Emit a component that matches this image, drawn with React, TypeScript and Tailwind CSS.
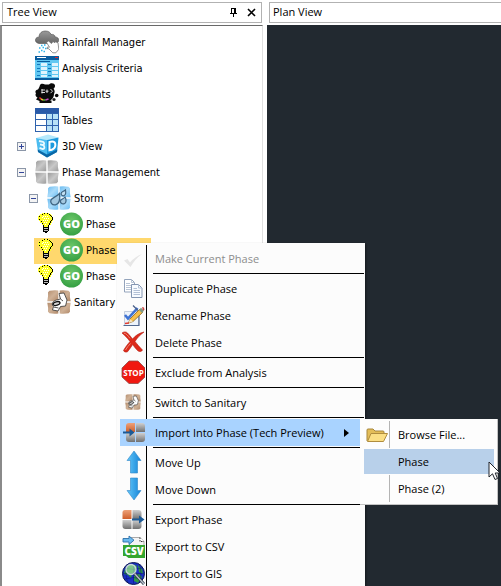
import type { ReactNode } from "react";
import clsx from "clsx";

/* ---------- Tree icons ---------- */

function RainIcon() {
  return (
    <svg viewBox="0 0 24 24" className="w-6 h-6">
      <defs>
        <linearGradient id="cloud" x1="0" y1="0" x2="0" y2="1">
          <stop offset="0" stopColor="#9a9a9a" />
          <stop offset="1" stopColor="#666" />
        </linearGradient>
      </defs>
      <path d="M4 13.500C1.500 13 0 11.500 .5 9.500 1 7.500 2.500 7 4 7.200 4 3 7 1 10.500 1c3 0 5 1.500 5.500 3.500 2.500-.5 4 .7 4.200 2.500C22.500 7 24 8.500 23.700 10.500c-.3 2-2 3-4 3z" fill="url(#cloud)" stroke="#4e4e4e" strokeWidth=".6" />
      <path d="M9 15h1.500M6 15.500h1.500M7.500 17.500H9M4 18h1.500M10 18.500h1.500M6 20.500h1.500M8.500 21.500H10M3.500 22H5" stroke="#2fb4ea" strokeWidth="1.500" />
      <path d="M11.500 12.500l2-1.500 3 2.500 1.500-2 1.800 1.200.7-.9 2.500 1 .8 6.500-3 3.500h-3l-4-4-1.800-.3.500-1.500 2 .2z" fill="#fff" stroke="#666" strokeWidth=".7" />
    </svg>
  );
}

function CriteriaIcon() {
  return (
    <svg viewBox="0 0 24 24" className="w-6 h-6" shapeRendering="crispEdges">
      <path d="M0 0h24v24H0z" fill="#62c8f2" />
      <path d="M0 0h24v4H0zM0 22h24v2H0z" fill="#0a5c9e" />
      <path d="M2 1h9v1H2z" fill="#fff" />
      <path d="M20 1h3v1h-3z" fill="#e0262c" />
      <path d="M2 5h13v1H2z" fill="#0a5c9e" />
      <path d="M6 7h6v14H6zM17 7h6v14h-6z" fill="#dff4fd" />
      <path d="M2 8h3v1H2zM2 12h3v1H2zM2 15h3v1H2zM2 19h3v1H2zM13 8h3v1h-3zM13 12h3v1h-3zM13 15h3v1h-3zM13 19h3v1h-3z" fill="#1379bd" />
      <path d="M6 10h6v1H6zM6 14h6v1H6zM6 18h6v1H6zM17 10h6v1h-6zM17 14h6v1h-6zM17 18h6v1h-6z" fill="#62c8f2" />
    </svg>
  );
}

function PollutantsIcon() {
  return (
    <svg viewBox="0 0 24 24" className="w-6 h-6">
      <path d="M5 3C6 1 8.500 1.500 10 2.500h4C15.500.8 19.500.8 20 3.500c.2 1.500-.6 2.500-1.500 3 1.500 2 1.300 3.500.5 5.500 0 3-2 6-4.500 6.500h2V21H4.500v-2L1 17.500l1.500-2C.5 15 0 12.500 1 11.500c-1.500-2 0-4 2-4C3.500 6.500 4.500 5 5 3z" fill="#0a0a0a" />
      <path d="M6.500 8h3.500M6.500 10.500H10M7 7v4.500M12 7.500v3.500M10.500 9.200h3M15.500 7l2 2.200-2 2" stroke="#eee" strokeWidth=".9" fill="none" />
      <circle cx="21.700" cy="13.500" r="1.800" fill="#0a0a0a" />
      <circle cx="19" cy="17.500" r="1.600" fill="#222" />
      <path d="M4.500 15.500L6 17" stroke="#e33" strokeWidth="1.400" />
      <path d="M6 17l2 1" stroke="#f5b52e" strokeWidth="1.400" />
      <path d="M8 18h2.500" stroke="#58c03a" strokeWidth="1.400" />
      <path d="M10.500 18l3-1" stroke="#c04ac0" strokeWidth="1.400" />
    </svg>
  );
}

function TablesIcon() {
  return (
    <svg viewBox="0 0 24 24" className="w-6 h-6" shapeRendering="crispEdges">
      <path d="M0 0h24v24H0z" fill="#2f62ad" />
      <path d="M1 6h10v5H1zM1 12h10v5H1zM1 18h10v5H1z" fill="#fff" />
      <path d="M12 6h5v5h-5zM12 12h5v5h-5zM12 18h5v5h-5zM18 6h5v5h-5zM18 12h5v5h-5zM18 18h5v5h-5z" fill="#b9e2f7" />
      <path d="M0 0h24v5H0z" fill="#2a5aa8" />
    </svg>
  );
}

function ThreeDIcon() {
  return (
    <svg viewBox="0 0 24 24" className="w-6 h-6">
      <path d="M1 4L13 .5l10.500 3L12 6z" fill="#b4e8fb" />
      <path d="M1 4l11 2v17.500L3 18z" fill="#4cbcf0" />
      <path d="M23.500 3.500L12 6v17.500l10-5.500z" fill="#1c9ade" />
      <path d="M3 18l9 5.500 10-5.500.3-2.500L12 20.500 2.700 15.500z" fill="#0b67a6" />
      <path d="M4 7l4 .8c1.500.6 1.500 2.600 0 3.200 2 1 1.800 4.200-.3 4L4.500 13.800M5 10.300l3 .7" fill="none" stroke="#eafaff" strokeWidth="1.800" />
      <path d="M14.500 8v8.300l2.200-.6c3-1.200 4-3.200 3.600-5.900-.3-2-2.300-2.700-5.800-1.800z" fill="none" stroke="#fff" strokeWidth="2" />
    </svg>
  );
}

// Four tiles with flared outer corners, shared by every phase related icon
const TILES = [
  "M2.500 .8Q7 0 11.300 .5v10.800H.3Q1.500 6 1 2.200z",
  "M12.700.5Q17 0 21.500 .8L23 2.200q-.5 4 .7 9.100h-11z",
  "M.3 12.700h11v10.800q-4.500 .5-8.800-.2L1 21.800q.5-4-.7-9.100z",
  "M12.700 12.700h11q-1.200 5-.7 9.100l-1.500 1.500q-4.300.7-8.800.2z",
];

function TileDefs() {
  return (
    <svg className="absolute w-0 h-0" aria-hidden="true">
      <defs>
        <linearGradient id="tileGray" x1="0" y1="0" x2="1" y2="1">
          <stop offset="0" stopColor="#999" />
          <stop offset=".5" stopColor="#c8c8c8" />
          <stop offset="1" stopColor="#9c9c9c" />
        </linearGradient>
        <linearGradient id="tileDark" x1="0" y1="0" x2="0" y2="1">
          <stop offset="0" stopColor="#cfcfcf" />
          <stop offset="1" stopColor="#707070" />
        </linearGradient>
        <linearGradient id="tileBlue" x1="0" y1="0" x2="1" y2="1">
          <stop offset="0" stopColor="#6cbcf0" />
          <stop offset=".5" stopColor="#a9dbfa" />
          <stop offset="1" stopColor="#6cbef2" />
        </linearGradient>
        <linearGradient id="tileTan" x1="0" y1="0" x2="1" y2="1">
          <stop offset="0" stopColor="#b38c6d" />
          <stop offset=".5" stopColor="#cfb196" />
          <stop offset="1" stopColor="#b08868" />
        </linearGradient>
        <linearGradient id="tileOrange" x1="0" y1="0" x2="0" y2="1">
          <stop offset="0" stopColor="#eda27a" />
          <stop offset="1" stopColor="#cf5f2a" />
        </linearGradient>
        <linearGradient id="arrowBlue" x1="0" y1="0" x2="1" y2="0">
          <stop offset="0" stopColor="#62c6f8" />
          <stop offset="1" stopColor="#1484d8" />
        </linearGradient>
        <radialGradient id="go" cx=".5" cy=".35" r=".65">
          <stop offset="0" stopColor="#6cc668" />
          <stop offset="1" stopColor="#35a043" />
        </radialGradient>
      </defs>
    </svg>
  );
}

function PhasesIcon() {
  return (
    <svg viewBox="0 0 24 24" className="w-6 h-6">
      {TILES.map((d) => (
        <path key={d} d={d} fill="url(#tileGray)" />
      ))}
    </svg>
  );
}

function StormIcon() {
  return (
    <svg viewBox="0 0 24 24" className="w-6 h-6">
      {TILES.map((d) => (
        <path key={d} d={d} fill="url(#tileBlue)" />
      ))}
      <path d="M12.500 7.500c.5 4 .5 10.500-4 11.300C5 19.500 3 16.500 4 14c1-2.500 5.500-3 8.500-6.500z" fill="#a3c8e0" stroke="#3f6480" strokeWidth="1.300" />
      <path d="M18.500 4c.6 3 .3 5.500-2 5.800-2 .2-3-1.800-2-3.200.8-1.100 2.500-1.300 4-2.600z" fill="#c2e0f2" stroke="#3f6480" strokeWidth="1.200" />
      <path d="M18 11c1.500 2.500 1.500 6-.7 6.800-2.300.7-4.300-1-3.800-3 .5-1.500 3-1.800 4.500-3.800z" fill="#a3c8e0" stroke="#3f6480" strokeWidth="1.200" />
    </svg>
  );
}

function SanitaryIcon({ small }: { small?: boolean }) {
  return (
    <svg viewBox="0 0 24 24" className={small ? "w-4 h-4 m-1" : "w-6 h-6"}>
      {TILES.map((d) => (
        <path key={d} d={d} fill="url(#tileTan)" />
      ))}
      <path d="M12 3.500l5-.5 3 7-1.500 6-5 .5-2.500 4.500-5.500-1 1-3.500C4 14.500 5.500 11 9.500 10l4-1z" fill="#fff" stroke="#333" strokeWidth=".8" />
      <path d="M6 14.500c0-2.500 6-4 7-2 .5 2-5.500 4.500-7 2z" fill="#d8d8d8" stroke="#111" strokeWidth="1.300" />
      <path d="M13.500 9l2.500 2M6.500 17l5 1" stroke="#555" fill="none" />
    </svg>
  );
}

function BulbIcon() {
  return (
    <svg viewBox="0 0 16 20" className="w-4 h-5" shapeRendering="crispEdges">
      <path d="M4 0h7v1h2v1h1v2h1v4h-1v2h-1v2h-2v2H5v-2H4v-2H2V8H1V7H0V3h1V2h1V1h2z" fill="#ffff28" />
      <path d="M5 3h1v1H5zM7 3h1v1H7zM9 3h1v1H9zM4 4h1v1H4zM6 5h1v1H6zM8 5h1v1H8zM10 5h1v1h-1zM5 7h1v1H5zM7 7h1v1H7zM9 7h1v1H9zM6 9h1v1H6zM8 9h1v1H8zM7 11h1v1H7z" fill="#fff" />
      <path d="M4 1h1v1H4zM6 0h1v1H6zM9 0h1v1H9zM1 3h1v1H1zM1 6h1v1H1zM3 8h1v1H3zM4 10h1v1H4zM5 12h1v1H5zM11 1h1v1h-1zM12 2h1v1h-1zM13 3h1v1h-1zM14 4h1v3h-1zM13 7h1v1h-1zM12 8h1v2h-1zM11 10h1v2h-1zM10 12h1v2h-1z" fill="#000" />
      <path d="M5 13h1v6H5zM10 13h1v5h-1zM6 14h4v1H6zM6 16h4v1H6zM6 18h4v1H6zM7 19h2v1H7z" fill="#000" />
      <path d="M6 15h4v1H6zM6 17h4v1H6z" fill="#bbb" />
    </svg>
  );
}

function GoIcon() {
  return (
    <svg viewBox="0 0 24 24" className="w-6 h-6">
      <circle cx="11.500" cy="12" r="11.500" fill="url(#go)" />
      <text x="11.500" y="16" textAnchor="middle" fontFamily="Open Sans, sans-serif" fontSize="11" fontWeight="800" fill="#fff">
        GO
      </text>
    </svg>
  );
}

/* ---------- Menu icons ---------- */

function CheckIcon() {
  return (
    <svg viewBox="0 0 24 24" className="w-6 h-6">
      <path d="M3 14.500l3.500-1.500L9 16.500Q14 10.500 21 8 14 13 9.500 21z" fill="#e6e6e6" />
    </svg>
  );
}

function CopyIcon() {
  return (
    <svg viewBox="0 0 24 24" className="w-6 h-6">
      <path d="M3.500 3.500h7l3 3v9.500h-10z" fill="#fff" stroke="#93a3bb" />
      <path d="M10.500 3.500v3h3M5 7.500h4M5 9.500h6M5 11.500h6M5 13.500h6" stroke="#b9c5d6" fill="none" />
      <path d="M10.500 8.500h7l3.500 3.500v9.500H10.500z" fill="#f8fbff" stroke="#8496b2" />
      <path d="M17.500 8.500V12H21M12.500 12.500h3.500M12.500 14.500h6.500M12.500 16.500h6.500M12.500 18.500h6.500" stroke="#b3c1d6" fill="none" />
    </svg>
  );
}

function RenameIcon() {
  return (
    <svg viewBox="0 0 24 24" className="w-6 h-6">
      <path d="M3.500 8.500h14v14h-14z" fill="#edf3fb" stroke="#c3cddd" />
      <path d="M2.500 22.500h15.500V11" fill="none" stroke="#52688f" strokeWidth="1.200" />
      <path d="M4 12l3 3.500L16.500 5" fill="none" stroke="#3e73d4" strokeWidth="2.600" />
      <path d="M12 2.500l5 5" stroke="#4a5f88" strokeWidth="1.200" />
      <path d="M7.500 20L9 16l9.500-9.500 3 3L12 18.500z" fill="#f5bf4a" stroke="#8c6420" strokeWidth=".8" />
      <path d="M18 7l2-2.200 3 2.700L21 10z" fill="#7f9a86" />
      <path d="M21 4l2 .5.5 2.500-1.500.5z" fill="#d04848" />
      <path d="M7.500 20L9 16l3 2.500z" fill="#f7e3bd" />
      <path d="M4 20.500l4-.5" stroke="#e23a2e" strokeWidth="1.500" />
    </svg>
  );
}

function DeleteIcon() {
  return (
    <svg viewBox="0 0 24 24" className="w-6 h-6">
      <path d="M1 3c2-1.500 4-1.500 5.500 0 2 2 3.500 4 5 6C14.500 5.500 18 3 23 2c-4 3-7 6-9 9.500 2.500 3 4.500 5.500 7.500 8.500-1 2-3.500 2-5 .5-2-2-3.500-4-4.800-6C10 17 8.500 19.500 6.500 21.800 5 22.500 3 22 2.500 20.500 4.500 17 6.500 14.500 9 11.500 6.500 8 4 5.500 1 3z" fill="#dc2b1b" stroke="#b51e12" strokeWidth=".6" />
      <path d="M3 3.200c2.500.3 4 2.700 6 5.300M4.500 20c1.500-2.500 3-4.500 5-6.500" stroke="#f28673" fill="none" />
    </svg>
  );
}

function StopIcon() {
  return (
    <svg viewBox="0 0 24 24" className="w-6 h-6">
      <path d="M8 1h9l7 7v9l-7 6.500H8L1 17V8z" fill="#f01810" stroke="#8e4a46" strokeWidth=".8" />
      <text x="12.500" y="15.500" textAnchor="middle" fontFamily="Open Sans, sans-serif" fontSize="8" fontWeight="700" fill="#fff">
        STOP
      </text>
    </svg>
  );
}

function TransferIcon({ out }: { out?: boolean }) {
  return (
    <svg viewBox="0 0 24 24" className="w-6 h-6">
      <path d={out ? "M4 3h6.500v9h-9V5.500Q1.500 3 4 3z" : "M8 3h6v9H5V6q0-3 3-3z"} fill="url(#tileOrange)" />
      <path d={out ? "M11.500 3h6q3 0 3 3v6h-9z" : "M15 3h6q3 0 3 3v6h-9z"} fill="url(#tileDark)" />
      <path d={out ? "M1.500 13h9v9H4.500q-3 0-3-3z" : "M5 13h9v9H8q-3 0-3-3z"} fill="url(#tileDark)" />
      <path d={out ? "M11.500 13h9v6q0 3-3 3h-6z" : "M15 13h9v6q0 3-3 3h-6z"} fill="url(#tileDark)" />
      <path
        d={out ? "M11 11.500h7V8.500l5.500 4-5.500 4v-3h-7z" : "M2 11.500h6.500V8.500l5 4-5 4v-3H2z"}
        fill="#1c5a96"
      />
    </svg>
  );
}

function ArrowIcon({ down }: { down?: boolean }) {
  return (
    <svg viewBox="0 0 24 24" className="w-6 h-6">
      <path
        d={down ? "M9.500 1h7v12.500h3.500L13 23 6 13.500h3.500z" : "M13 1l7 9.500h-3.500V23h-7V10.500H6z"}
        fill="url(#arrowBlue)"
        stroke="#2f86c8"
        strokeWidth=".6"
      />
    </svg>
  );
}

function CsvIcon() {
  return (
    <svg viewBox="0 0 24 24" className="w-6 h-6">
      <path d="M8.500 3.500H19l4 4V14H8.500z" fill="#f3f3f3" stroke="#aaa" />
      <path d="M19 3.500v4h4" fill="#fff" stroke="#333" strokeDasharray="1.500 1" />
      <path d="M2 11h22v13H7.500L5 22H2z" fill="#35a62f" />
      <path d="M2 4.500h6V2l5 4.200-5 4.300V8H2z" fill="#6bb9ee" stroke="#2c6fa8" strokeWidth=".9" />
      <text x="13" y="21" textAnchor="middle" fontFamily="Open Sans, sans-serif" fontSize="10" fontWeight="800" fill="#fff">
        CSV
      </text>
    </svg>
  );
}

function GlobeIcon() {
  return (
    <svg viewBox="0 0 24 24" className="w-6 h-6">
      <circle cx="12.500" cy="12.500" r="11" fill="#1b2fc4" stroke="#0e1a52" />
      <path d="M4 8l3-4 5-1 4 2-1 5-4 3-1 4-3-3-4-1zM17 4l4 4 1 5-4-2zM13 15l5-2 3 3-4 6-4-2z" fill="#2f9a42" />
      <path d="M2 12.500h21M12.500 2v21M4 7q8.500 3 17 0M4 18q8.500-3 17 0M7 3q-4 9 0 19M18 3q4 9 0 19" stroke="#0b1470" strokeWidth=".5" fill="none" />
      <circle cx="10" cy="8.500" r="5" fill="#a8dfb0" fillOpacity=".65" stroke="#c9d6dc" strokeWidth="1.300" />
      <path d="M13.500 12.500L23 23" stroke="#303a48" strokeWidth="2.800" />
      <path d="M13.500 12.500L23 23" stroke="#b8c2cc" strokeWidth="1.400" />
    </svg>
  );
}

function FolderIcon() {
  return (
    <svg viewBox="0 0 22 16" className="w-[22px] h-4">
      <path d="M1 14V3q0-1 1-1h5l2 2h8q1 0 1 1v3" fill="#e3bd58" stroke="#a7873c" />
      <path d="M1.500 14.500L5 6.500h16.500l-4 8z" fill="#fbdf85" stroke="#b08d3e" />
    </svg>
  );
}

/* ---------- Data ---------- */

type TreeItem = {
  label: string;
  icon: ReactNode;
  indent: string;
  expander?: "+" | "-";
  bulb?: boolean;
  selected?: boolean;
};

const treeItems: TreeItem[] = [
  { label: "Rainfall Manager", icon: <RainIcon />, indent: "pl-[15px]" },
  { label: "Analysis Criteria", icon: <CriteriaIcon />, indent: "pl-[15px]" },
  { label: "Pollutants", icon: <PollutantsIcon />, indent: "pl-[15px]" },
  { label: "Tables", icon: <TablesIcon />, indent: "pl-[15px]" },
  { label: "3D View", icon: <ThreeDIcon />, indent: "pl-[15px]", expander: "+" },
  { label: "Phase Management", icon: <PhasesIcon />, indent: "pl-[15px]", expander: "-" },
  { label: "Storm", icon: <StormIcon />, indent: "pl-[27px]", expander: "-" },
  { label: "Phase", icon: <GoIcon />, indent: "pl-8", bulb: true },
  { label: "Phase", icon: <GoIcon />, indent: "pl-8", bulb: true, selected: true },
  { label: "Phase", icon: <GoIcon />, indent: "pl-8", bulb: true },
  { label: "Sanitary", icon: <SanitaryIcon />, indent: "pl-[27px]" },
];

type MenuItem = { label: string; icon: ReactNode; disabled?: boolean; open?: boolean };

const menuGroups: MenuItem[][] = [
  [{ label: "Make Current Phase", icon: <CheckIcon />, disabled: true }],
  [
    { label: "Duplicate Phase", icon: <CopyIcon /> },
    { label: "Rename Phase", icon: <RenameIcon /> },
    { label: "Delete Phase", icon: <DeleteIcon /> },
  ],
  [{ label: "Exclude from Analysis", icon: <StopIcon /> }],
  [{ label: "Switch to Sanitary", icon: <SanitaryIcon small /> }],
  [{ label: "Import Into Phase (Tech Preview)", icon: <TransferIcon />, open: true }],
  [
    { label: "Move Up", icon: <ArrowIcon /> },
    { label: "Move Down", icon: <ArrowIcon down /> },
  ],
  [
    { label: "Export Phase", icon: <TransferIcon out /> },
    { label: "Export to CSV", icon: <CsvIcon /> },
    { label: "Export to GIS", icon: <GlobeIcon /> },
  ],
];

/* ---------- Pieces ---------- */

function TreeRow({ item }: { item: TreeItem }) {
  return (
    <li className={clsx("flex h-[26px]", item.indent)}>
      {/* Expander column, phases have none */}
      {!item.bulb && (
        <span className="w-[18px] h-6 flex items-center shrink-0">
          {item.expander && (
            <button
              aria-label={item.expander === "+" ? "Expand" : "Collapse"}
              className="w-[9px] h-[9px] border border-[#8b96a8] bg-[#f4f4f4] flex items-center justify-center"
            >
              <svg viewBox="0 0 5 5" className="w-[5px] h-[5px]" shapeRendering="crispEdges">
                <path d={item.expander === "+" ? "M0 2h5v1H0zM2 0h1v5H2z" : "M0 2h5v1H0z"} fill="#33469a" />
              </svg>
            </button>
          )}
        </span>
      )}
      <button
        className={clsx(
          "flex h-[26px] text-left whitespace-nowrap",
          item.selected && "bg-[#ffd86d] w-[117px]"
        )}
      >
        {item.bulb && (
          <span className="w-[26px] pl-1 pt-px shrink-0">
            <BulbIcon />
          </span>
        )}
        {item.icon}
        <span className={clsx("leading-[26px]", item.bulb ? "pl-0.5" : "pl-[3px]")}>{item.label}</span>
      </button>
    </li>
  );
}

function MenuRow({ item }: { item: MenuItem }) {
  return (
    <button
      disabled={item.disabled}
      className={clsx(
        "w-full h-[27px] flex items-center text-left whitespace-nowrap",
        item.open && "bg-[#a9d3ff]",
        item.disabled ? "text-[#8d8d8d]" : "text-black"
      )}
    >
      <span
        className={clsx(
          "w-[27px] h-full pl-px pt-px border-r shrink-0",
          item.open ? "border-transparent" : "border-black"
        )}
      >
        {item.icon}
      </span>
      <span className="pl-2 pt-0.5 flex-1">{item.label}</span>
      {item.open && (
        <svg viewBox="0 0 5 8" className="w-[5px] h-2 mr-[15px]">
          <path d="M0 0l5 4-5 4z" fill="#000" />
        </svg>
      )}
    </button>
  );
}

function ContextMenu() {
  return (
    <div className="absolute left-[117px] top-[243px] w-[248px] bg-[#fcfcfc] pt-0.5 pl-[3px] pr-px shadow-[1px_1px_2px_rgba(0,0,0,0.4)]">
      {menuGroups.map((group, i) => (
        <div key={group[0].label}>
          {i > 0 && (
            <div className="flex items-center h-[3px]">
              <div className="w-[27px] h-full border-r border-black" />
              <div className="flex-1 h-px ml-[6px] bg-black" />
            </div>
          )}
          {group.map((item) => (
            <MenuRow key={item.label} item={item} />
          ))}
        </div>
      ))}
    </div>
  );
}

function SubMenu() {
  return (
    <div className="absolute left-[360px] top-[419px] w-[138px] py-0.5 pl-1 pr-[3px] bg-[#fdfdfd] border-r border-b border-[#c4c4c4] text-black">
      <button className="w-full h-[27px] flex items-center text-left">
        <span className="w-[26px] h-full pl-0.5 flex items-center border-r border-[#b4b4b4]">
          <FolderIcon />
        </span>
        <span className="pl-2 pt-0.5">Browse File...</span>
      </button>
      <button className="w-full h-[27px] py-px text-left">
        <span className="h-full flex items-center bg-[#b8d0ea] pl-[34px] pt-0.5">Phase</span>
      </button>
      <button className="w-full h-[27px] flex items-center text-left">
        <span className="w-[26px] h-full border-r border-[#b4b4b4]" />
        <span className="pl-2 pt-0.5">Phase (2)</span>
      </button>
    </div>
  );
}

export default function App() {
  return (
    <main className="relative h-screen flex overflow-hidden bg-white font-['Open_Sans',sans-serif] text-[11px] text-black">
      <TileDefs />

      {/* Tree View panel */}
      <section className="w-[263px] shrink-0 flex flex-col">
        <header className="h-[21px] mt-0.5 ml-0.5 mr-px mb-0.5 pl-1 pr-[5px] border border-[#b2b2b2] flex items-center">
          <h2 className="flex-1">Tree View</h2>
          <button aria-label="Pin" className="w-[9px] h-[9px] mr-[9px]">
            <svg viewBox="0 0 9 9" className="w-[9px] h-[9px]" shapeRendering="crispEdges">
              <path d="M2 0h5v5h1v1H5v3H4V6H1V5h1zM3 1v4h2V1z" fill="#000" fillRule="evenodd" />
            </svg>
          </button>
          <button aria-label="Close" className="w-[9px] h-[9px]">
            <svg viewBox="0 0 9 9" className="w-[9px] h-[9px]">
              <path d="M1 1l7 7M8 1L1 8" stroke="#000" strokeWidth="1.600" />
            </svg>
          </button>
        </header>
        <ul className="flex-1 pt-1 border-t border-t-[#696969] border-l-2 border-l-[#8a8a8a] border-r border-r-[#e0e0e0] font-['DejaVu_Sans_Condensed','DejaVu_Sans',sans-serif]">
          {treeItems.map((item, i) => (
            <TreeRow key={i} item={item} />
          ))}
        </ul>
      </section>

      {/* Plan View panel */}
      <section className="flex-1 pl-1 flex flex-col">
        <header className="h-[21px] mt-0.5 ml-0.5 mb-0.5 pl-[3px] border border-r-0 border-[#b2b2b2] flex items-center">
          <h2>Plan View</h2>
        </header>
        <div className="flex-1 bg-[#222930]" />
      </section>

      <ContextMenu />
      <SubMenu />

      {/* Mouse pointer */}
      <svg viewBox="0 0 13 20" className="absolute left-[488px] top-[461px] w-[13px] h-5">
        <path d="M1 1v15l3.500-3.200L7 18.500l2.500-1-2.300-5.500H12z" fill="#fff" stroke="#20242c" />
      </svg>
    </main>
  );
}
